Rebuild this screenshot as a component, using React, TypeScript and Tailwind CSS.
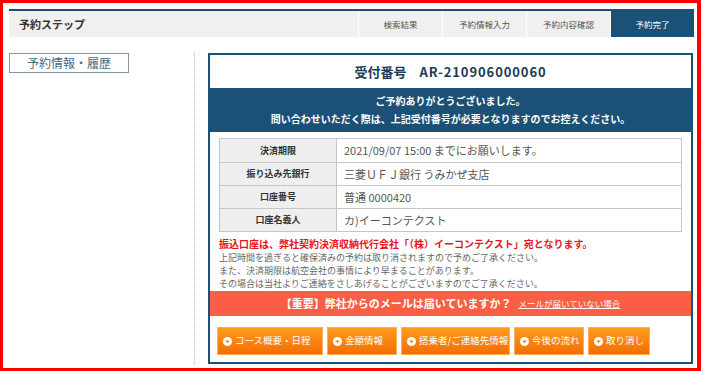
import React from "react";

const F = { fontFamily: '"Noto Sans CJK JP", "Noto Sans", sans-serif' };

function BtnIcon() {
  return (
    <svg width="9" height="9" viewBox="0 0 9 9" className="shrink-0">
      <circle cx="4.5" cy="4.5" r="4.5" fill="#ffffff" />
      <path d="M2.3 3.6 L6.7 3.6 L4.5 6.2 Z" fill="#f57a00" />
    </svg>
  );
}

function Btn({ label, w }: { label: string; w: string }) {
  return (
    <div
      className={`${w} h-[28px] flex items-center gap-[3px] pl-[5px] border border-[#ffad5c] bg-gradient-to-b from-[#ff9a1f] to-[#f26f00] text-white text-[9.5px] leading-none whitespace-nowrap overflow-hidden`}
    >
      <BtnIcon />
      <span>{label}</span>
    </div>
  );
}

const rows: [string, string][] = [
  ["決済期限", "2021/09/07 15:00 までにお願いします。"],
  ["振り込み先銀行", "三菱ＵＦＪ銀行 うみかぜ支店"],
  ["口座番号", "普通 0000420"],
  ["口座名義人", "カ)イーコンテクスト"],
];

export default function App() {
  return (
    <div
      style={F}
      className="w-[701px] h-[371px] bg-white overflow-hidden border-solid border-[#ff0000] border-t-[3px] border-l-[3px] border-r-[4px] border-b-[3px]"
    >
      <div className="pl-[6px] pr-[3px] pt-[6px]">
        {/* header */}
        <div className="h-[28px] border-t-2 border-[#1d4f73] bg-[#f0f0f0] flex">
          <div className="flex-1 flex items-center pl-[10px] text-[11px] font-bold text-[#333]">
            予約ステップ
          </div>
          {["検索結果", "予約情報入力", "予約内容確認"].map((t) => (
            <div
              key={t}
              className="w-[84px] border-l border-white flex items-center justify-center text-[8.5px] text-[#555]"
            >
              {t}
            </div>
          ))}
          <div className="w-[84px] border-l border-white bg-[#1b5176] flex items-center justify-center text-[8.5px] text-white">
            予約完了
          </div>
        </div>

        {/* body */}
        <div className="flex mt-[16px]">
          <div className="w-[120px] shrink-0">
            <div className="h-[20px] border border-[#8299ab] flex items-center justify-center text-[12px] text-[#4a6680]">
              予約情報・履歴
            </div>
          </div>
          <div className="ml-[65px] w-0 border-l border-dotted border-[#b5b5b5] self-stretch" />
          <div className="ml-[13px] w-[485px] border-2 border-[#1b5176]">
            <div className="h-[33px] flex items-center justify-center text-[13px] font-bold text-[#1f3a55]">
              <span>受付番号</span>
              <span className="ml-[13px] tracking-[0.9px]">AR-210906000060</span>
            </div>
            <div className="bg-[#1b5176] py-[4px] text-center text-white text-[10px] font-bold leading-[18px]">
              <div>ご予約ありがとうございました。</div>
              <div>問い合わせいただく際は、上記受付番号が必要となりますのでお控えください。</div>
            </div>

            <div className="px-[9px] pt-[6px]">
              <div className="border border-[#c6c6c6]">
                {rows.map(([k, v], i) => (
                  <div
                    key={k}
                    className={`flex h-[23px] ${i > 0 ? "border-t border-[#c6c6c6]" : ""}`}
                  >
                    <div className="w-[117px] shrink-0 bg-[#efefef] border-r border-[#c6c6c6] flex items-center justify-center text-[9px] font-bold text-[#333]">
                      {k}
                    </div>
                    <div className="flex-1 flex items-center pl-[7px] text-[11px] text-[#555]">
                      {v}
                    </div>
                  </div>
                ))}
              </div>
              <div className="mt-[5px] text-[10px] font-bold text-[#e8141c] leading-[14px]">
                振込口座は、弊社契約決済収納代行会社「（株）イーコンテクスト」宛となります。
              </div>
              <div className="text-[9px] text-[#666] leading-[13px]">
                <div>上記時間を過ぎると確保済みの予約は取り消されますので予めご了承ください。</div>
                <div>また、決済期限は航空会社の事情により早まることがあります。</div>
                <div>その場合は当社よりご連絡をさしあげることがございますのでご了承ください。</div>
              </div>
            </div>

            <div className="mt-[1px] h-[25px] bg-[#fa5f45] flex items-center justify-center gap-[7px] text-white">
              <span className="text-[11px] font-bold">【重要】弊社からのメールは届いていますか？</span>
              <span className="text-[8.5px] underline">メールが届いていない場合</span>
            </div>

            <div className="flex gap-[4px] pl-[7px] pt-[11px] pb-[7px]">
              <Btn label="コース概要・日程" w="w-[106px]" />
              <Btn label="金額情報" w="w-[70px]" />
              <Btn label="搭乗者/ご連絡先情報" w="w-[109px]" />
              <Btn label="今後の流れ" w="w-[70px]" />
              <Btn label="取り消し" w="w-[62px]" />
            </div>
          </div>
        </div>
      </div>
    </div>
  );
}
